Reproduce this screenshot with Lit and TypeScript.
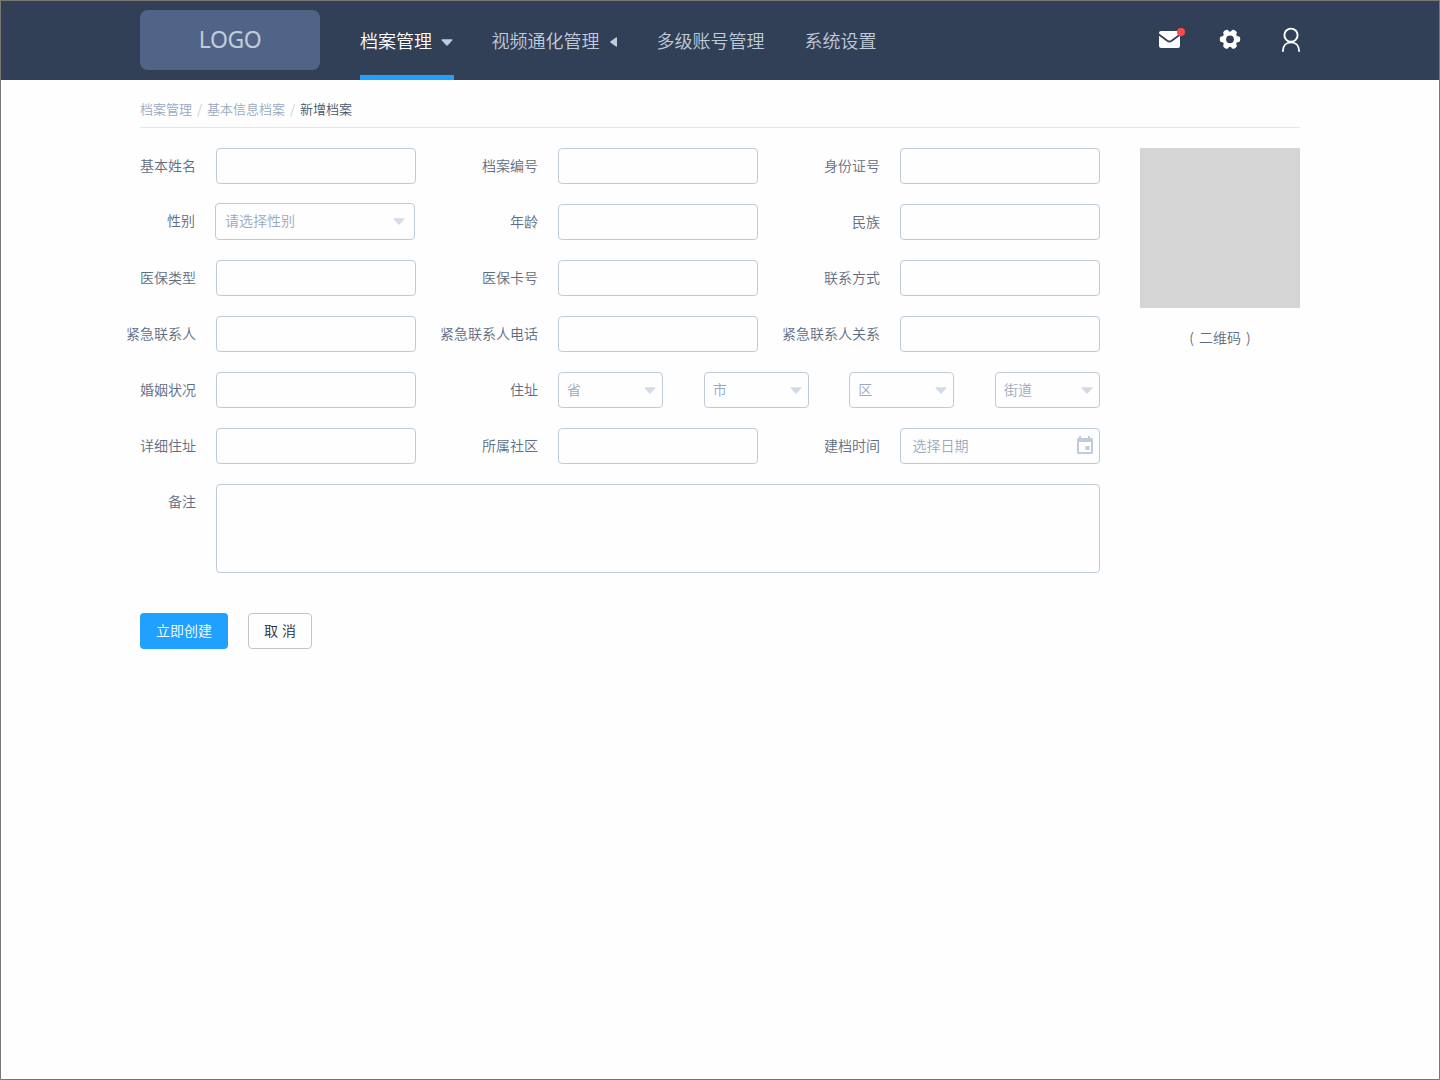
import { LitElement, html, css, svg } from "lit";
import { customElement, property } from "lit/decorators.js";

const caret = html`<svg class="caret" width="12" height="7" viewBox="0 0 12 7">
  <path d="M1.2 0.3H10.8Q12 0.3 11.3 1.2L7.1 5.9Q6 7 4.9 5.9L0.7 1.2Q0 0.3 1.2 0.3Z" fill="currentColor" />
</svg>`;

@customElement("form-field")
class FormField extends LitElement {
  @property() label = "";
  static styles = css`
    :host { display: flex; align-items: flex-start; gap: 20px; min-width: 0; }
    .label {
      flex: none; width: 56px; height: 36px; line-height: 34px;
      display: flex; justify-content: flex-end; white-space: nowrap; color: #5e6d82;
    }
    .control { flex: 1; min-width: 0; display: flex; justify-content: space-between; }
  `;
  render() {
    return html`<div class="label">${this.label}</div>
      <div class="control"><slot></slot></div>`;
  }
}

@customElement("app-header")
class AppHeader extends LitElement {
  static styles = css`
    :host { display: block; height: 79px; background: #324057; color: #c0ccda; }
    .inner { width: 1160px; height: 79px; margin: 0 auto; display: flex; }
    .logo {
      box-sizing: border-box; width: 180px; height: 60px; margin-top: 9px; border-radius: 8px; background: #506487;
      display: flex; align-items: center; justify-content: center; padding-bottom: 2px;
      font-family: "Noto Sans", sans-serif; font-size: 23px; font-weight: 400; letter-spacing: -0.5px;
    }
    nav { display: flex; margin-left: 40px; font-size: 18px; }
    .item {
      display: flex; align-items: center; box-sizing: border-box; height: 79px; white-space: nowrap;
      padding-top: 4px; border-bottom: 5px solid transparent; margin-right: 38px;
    }
    .item.active { color: #fff; border-color: #20a0ff; margin-right: 37.5px; }
    .caret { color: #c0ccda; margin: 4px 1px 0 9px; }
    .left { margin: 4px 2px 0 10px; }
    .last { margin-right: 40px; }
    .icons { margin-left: auto; display: flex; height: 79px; }
    .icons svg { display: block; margin-top: 19px; }
  `;
  render() {
    return html`<div class="inner">
      <div class="logo">LOGO</div>
      <nav>
        <div class="item active">档案管理${caret}</div>
        <div class="item">视频通化管理
          <svg class="left" width="7" height="10" viewBox="0 0 7 10"><path d="M7 1V9Q7 10.3 6 9.5L0.6 5.7Q-0.2 5 0.6 4.3L6 0.5Q7 -0.3 7 1Z" fill="#c0ccda"/></svg>
        </div>
        <div class="item last">多级账号管理</div>
        <div class="item last">系统设置</div>
      </nav>
      <div class="icons">
        <svg width="150" height="40" viewBox="1150 20 150 40" overflow="visible">
          <rect x="1159" y="31" width="21" height="17" rx="2.2" fill="#fff" />
          <path d="M1158.5 34.3L1167.3 40.8Q1169.5 42.2 1171.7 40.8L1180.5 34.3" fill="none" stroke="#324057" stroke-width="1.8" />
          <circle cx="1181" cy="32" r="4" fill="#ff4949" />
          ${[0, 60, 120].map((a) => svg`<rect x="1219.8" y="36.3" width="20.4" height="6" rx="2.4" fill="#fff" transform="rotate(${a} 1230 39.3)" />`)}
          <circle cx="1230" cy="39.3" r="5.8" fill="none" stroke="#fff" stroke-width="4" />
          <circle cx="1230" cy="39.3" r="3.9" fill="#324057" />
          <circle cx="1291" cy="35.2" r="6.6" fill="none" stroke="#fff" stroke-width="1.9" />
          <path d="M1282.8 51.8C1282.8 45.5 1286.5 42.4 1291 42.4S1299.2 45.5 1299.2 51.8" fill="none" stroke="#fff" stroke-width="1.9" />
        </svg>
      </div>
    </div>`;
  }
}

@customElement("app-root")
class AppRoot extends LitElement {
  static styles = css`
    :host {
      display: block; box-sizing: border-box; width: 1440px; height: 1080px; overflow: hidden;
      border: 1px solid #787772; background: #fefefe;
      font-family: "Noto Sans CJK SC", sans-serif; font-size: 14px; font-weight: 350;
    }
    .page { width: 1160px; margin: 0 auto; }
    .crumbs {
      box-sizing: border-box; height: 48px; padding-top: 19px; border-bottom: 1px solid #e0e6ed;
      display: flex; align-items: flex-start; font-size: 13px; line-height: 20px; color: #99a9bf;
    }
    .sep { width: 15px; text-align: center; color: #c0ccda; }
    .current { color: #475669; }
    .body { display: flex; justify-content: space-between; margin-top: 20px; }
    .form { width: 960px; display: grid; grid-template-columns: repeat(3, 276px); column-gap: 66px; row-gap: 20px; }
    .wide { grid-column: span 2; }
    .full { grid-column: span 3; }
    .box {
      box-sizing: border-box; width: 100%; height: 36px; border: 1px solid #bfcbd9; border-radius: 4px;
      display: flex; align-items: center; justify-content: space-between; padding: 0 6px 0 8px;
      line-height: 20px; color: #99a9bf;
    }
    .text { margin-top: -2px; }
    .short { width: 105px; }
    .area { height: 89px; }
    .gender { margin: -1px 1px 0 -1px; }
    .gender .box { height: 37px; padding: 0 9px 0 9px; }
    .gender .text { margin-top: -3px; }
    .date { padding: 0 5px 0 11.6px; }
    .date svg { margin-top: -3px; }
    .caret { color: #d3dce6; }
    .qr { width: 160px; text-align: center; color: #5e6d82; word-spacing: 2px; line-height: 20px; }
    .code { height: 160px; background: #d5d5d5; margin-bottom: 19px; }
    .actions { display: flex; gap: 20px; margin-top: 40px; }
    .btn {
      box-sizing: border-box; height: 36px; width: 88px; border-radius: 4px; background: #20a0ff; color: #fff;
      display: flex; align-items: center; justify-content: center; padding-bottom: 2px;
    }
    .plain { width: 64px; border: 1px solid #c4c4c4; background: none; color: #1f2d3d; word-spacing: 1px; }
  `;
  private input(label: string) {
    return html`<form-field label=${label}><div class="box"></div></form-field>`;
  }
  render() {
    return html`
      <app-header></app-header>
      <main class="page">
        <div class="crumbs">
          <span>档案管理</span><span class="sep">/</span><span>基本信息档案</span><span class="sep">/</span
          ><span class="current">新增档案</span>
        </div>
        <div class="body">
          <div class="form">
            ${["基本姓名", "档案编号", "身份证号"].map((l) => this.input(l))}
            <form-field class="gender" label="性别"><div class="box"><span class="text">请选择性别</span>${caret}</div></form-field>
            ${["年龄", "民族", "医保类型", "医保卡号", "联系方式", "紧急联系人", "紧急联系人电话", "紧急联系人关系", "婚姻状况"].map((l) => this.input(l))}
            <form-field class="wide" label="住址">
              ${["省", "市", "区", "街道"].map((t) => html`<div class="box short"><span class="text">${t}</span>${caret}</div>`)}
            </form-field>
            ${["详细住址", "所属社区"].map((l) => this.input(l))}
            <form-field label="建档时间">
              <div class="box date"><span class="text">选择日期</span>
                <svg width="18" height="18" viewBox="0 0 18 18" fill="#bfcbd9">
                  <path fill-rule="evenodd" d="M3 0H5V2H12V0H14V2H15.5Q17 2 17 3.5V16.5Q17 18 15.5 18H2.5Q1 18 1 16.5V3.5Q1 2 2.5 2H3ZM3 6V16H15V6Z" />
                  <rect x="9.5" y="10" width="4" height="4" />
                </svg>
              </div>
            </form-field>
            <form-field class="full" label="备注"><div class="box area"></div></form-field>
          </div>
          <div class="qr">
            <div class="code"></div>
            ( 二维码 )
          </div>
        </div>
        <div class="actions">
          <div class="btn">立即创建</div>
          <div class="btn plain">取 消</div>
        </div>
      </main>
    `;
  }
}
